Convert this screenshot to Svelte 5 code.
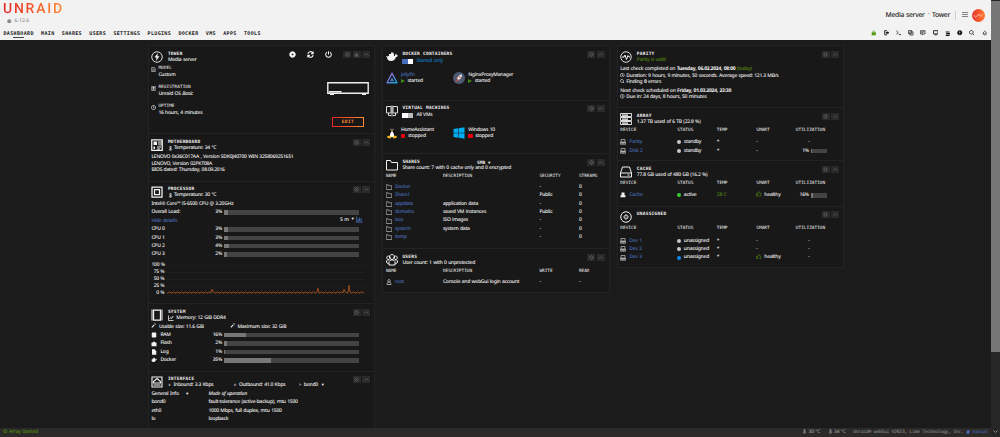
<script lang="ts">
  type Shape = { d: string; fill?: boolean; w?: number };

  const icons: Record<string, Shape[]> = {
    tower: [{ d: 'M12 1.5a10.5 10.5 0 1 0 0 21a10.5 10.5 0 1 0 0-21z', w: 1.8 }, { d: 'M13.5 4 7 13h4l-1 7 7-9.500h-4z', fill: true }],
    board: [{ d: 'M1.500 1.500h21v21h-21z', w: 2.5 }, { d: 'M5 5h7v7H5zM15 4h2v9h-2zM19 4h2v9h-2zM5 15h3v5H5zM12 15h8v2h-8zM12 19h6v2h-6z', fill: true }],
    cpu: [{ d: 'M2 2h20v20H2z', w: 2.5 }, { d: 'M7 7h10v10H7z', w: 2.5 }],
    memory: [{ d: 'M5 2h14v20H5z', w: 2.5 }, { d: 'M2 1v22M22 1v22', w: 2 }],
    port: [{ d: 'M2 2h20v20H2z', w: 2.2 }, { d: 'M5 14v-3l7-6 7 6v3zM5 18h14', w: 2.2 }],
    whale: [{ d: 'M0 10c3 1 3 1 5 0h13c0-3 1-4 2-5 1 1 1 2 1 3l3 1c-1 2-3 3-4 3-2 6-6 8-10 8-5 0-8-3-8-8-1 0-2-1-2-2zM6 6h10v4H6zM10 3h5v4h-5z', fill: true }],
    vm: [{ d: 'M1 3h9v13H1zM14 3h9v13h-9zM5 16v5h5M19 16v5h-5M12 1v22', w: 1.8 }],
    folder: [{ d: 'M1 3h8l2 4h12v15H1z', w: 2 }],
    users: [{ d: 'M12 1a5 5 0 1 0 .1 0zM5 4a3.500 3.500 0 1 0 .1 0zM19 4a3.500 3.500 0 1 0 .1 0zM6 22v-5c0-7 12-7 12 0v5zM1 17v-3q2-4 5-2M23 17v-3q-2-4-5-2M1 17l5 3M23 17l-5 3', w: 2 }],
    parity: [{ d: 'M12 1.500a10.500 10.500 0 1 0 0 21a10.500 10.500 0 1 0 0-21z', w: 1.8 }, { d: 'M4 12h4l2-4 3 9 3-8 2 3h2', w: 2 }],
    array: [{ d: 'M1 1h22v6H1zM1 9h22v6H1zM1 17h22v6H1z', w: 1.8 }, { d: 'M4 4h12M4 12h12M4 20h12', w: 2.500 }],
    disk: [{ d: 'M5 2h14l4 12v8H1v-8zM1 14h22M15 18h4', w: 2 }],
    unassigned: [{ d: 'M12 1.500a10.500 10.500 0 1 0 0 21a10.500 10.500 0 1 0 0-21zM12 8a4 4 0 1 0 .1 0z', w: 2 }, { d: 'M11 11h2v2h-2z', fill: true }],
    gear: [{ d: 'M12 5a7 7 0 1 0 .1 0zM12 1v4M12 19v4M1 12h4M19 12h4M4 4l3 3M17 17l3 3M20 4l-3 3M7 17l-3 3', w: 4 }],
    up: [{ d: 'M3 17l9-9 9 9', w: 4 }],
    eject: [{ d: 'M2 15 12 4l10 11zM2 17h20v4H2z', fill: true }],
    stop: [{ d: 'M12 5a7 7 0 1 0 .1 0z', w: 8 }],
    sync: [{ d: 'M3 10a9 9 0 0 1 16-4M21 2v7h-7M21 14a9 9 0 0 1-16 4M3 22v-7h7', w: 4 }],
    power: [{ d: 'M7 4a9.500 9.500 0 1 0 10 0M12 1v11', w: 3.500 }],
    file: [{ d: 'M4 1h11l5 6v16H4z', w: 3 }, { d: 'M8 10h8M8 14h8M8 18h8', w: 2 }],
    badge: [{ d: 'M4 1h16v22H4zM8 18h8', w: 3 }, { d: 'M12 5a4 4 0 1 0 .1 0z', fill: true }],
    clock: [{ d: 'M12 2a10 10 0 1 0 .1 0zM12 7v6h4', w: 3.500 }],
    thermo: [{ d: 'M9 2h6v11a5 5 0 1 1-6 0z', w: 3 }, { d: 'M11 8h3v11h-3z', fill: true }],
    chart: [{ d: 'M2 2v20h20', w: 3 }, { d: 'M6 16l5-6 4 3 6-9', w: 3.500 }],
    bars: [{ d: 'M1 2h3v17h19v3H1zM6 10h3v7H6zM11 5h3v12h-3zM16 8h3v9h-3z', fill: true }],
    wand: [{ d: 'M4 21 16 9', w: 5 }, { d: 'M14 2h8v8z', fill: true }],
    ram: [{ d: 'M5 2h14l2 4v12l-2 4H5l-2-4V6z', fill: true }],
    flash: [{ d: 'M8 3h8v3h6v15H2V6h6z', fill: true }],
    log: [{ d: 'M4 1h10l7 7v15H4z', fill: true }],
    search: [{ d: 'M10 2a8 8 0 1 0 .1 0zM16 16l6 6', w: 3.500 }],
    user: [{ d: 'M12 2a5 5 0 1 0 .1 0zM4 22c0-13 16-13 16 0z', w: 2.500 }],
    drive: [{ d: 'M4 2h16v11H4zM2 13h20v8H2zM6 17h12', w: 2.200 }],
    ssd: [{ d: 'M6 2h12v11h4v8H2v-8h4z', fill: true }],
    thumb: [{ d: 'M2 10h5v12H2zM7 11l5-9q4 0 2 7h8l-2 13H7', w: 2.500 }],
    lock: [{ d: 'M3 10h18v13H3z', fill: true }, { d: 'M7 10V7q5-9 10 0v3', w: 3 }],
    exit: [{ d: 'M13 3H3v18h10', w: 4 }, { d: 'M8 9h7V4l8 8-8 8v-5H8z', fill: true }],
    term: [{ d: 'M2 4l8 7-8 7M12 20h11', w: 3.500 }],
    copy: [{ d: 'M2 2h14v14H2zM8 8h14v14H8z', w: 3 }],
    comment: [{ d: 'M2 3h20v14h-8l-4 5v-5H2zM6 8h12M6 12h8', w: 3 }],
    monitor: [{ d: 'M2 3h20v14H2zM7 21h10', w: 4 }],
    server: [{ d: 'M3 2h17v5H3zM5 9h17v6H5zM3 17h17v5H3z', fill: true }],
    help: [{ d: 'M12 1a11 11 0 1 0 .1 0zM10.500 17h3v3h-3zM10.500 6h3v8h-3z', fill: true }],
    bell: [{ d: 'M4 18q3-3 3-9 5-9 10 0 0 6 3 9zM10 22h4', w: 3 }],
    globe: [{ d: 'M12 1a11 11 0 1 0 .1 0z', fill: true }],
    book: [{ d: 'M6 2h16l-3 20H2z', fill: true }],
  };

  const nav = ['Dashboard', 'Main', 'Shares', 'Users', 'Settings', 'Plugins', 'Docker', 'VMs', 'Apps', 'Tools'];
  const tools = ['lock', 'exit', 'term', 'copy', 'comment', 'monitor', 'server', 'help', 'search', 'bell'];

  const cores = [3, 3, 4, 2];
  const usage = [
    { icon: 'ram', label: 'RAM', value: 16 },
    { icon: 'flash', label: 'Flash', value: 2 },
    { icon: 'log', label: 'Log', value: 1 },
    { icon: 'whale', label: 'Docker', value: 35 },
  ];
  const network = [
    ['bond0', 'fault-tolerance (active-backup), mtu 1500'],
    ['eth0', '1000 Mbps, full duplex, mtu 1500'],
    ['lo', 'loopback'],
  ];
  const shares = [
    ['Docker', '', '-'],
    ['Share1', '', 'Public'],
    ['appdata', 'application data', '-'],
    ['domains', 'saved VM instances', 'Public'],
    ['isos', 'ISO images', '-'],
    ['system', 'system data', '-'],
    ['temp', '', '-'],
  ];

  type Device = { name: string; icon: string; color: string; status: string; temp: string; healthy?: boolean; used?: number };
  const arrayDisks: Device[] = [
    { name: 'Parity', icon: 'drive', color: '#c8c8c8', status: 'standby', temp: '*' },
    { name: 'Disk 2', icon: 'drive', color: '#c8c8c8', status: 'standby', temp: '*', used: 1 },
  ];
  const cacheDisks: Device[] = [
    { name: 'Cache', icon: 'ssd', color: '#33cc33', status: 'active', temp: '28 C', healthy: true, used: 16 },
  ];
  const otherDisks: Device[] = [
    { name: 'Dev 1', icon: 'drive', color: '#c8c8c8', status: 'unassigned', temp: '*' },
    { name: 'Dev 2', icon: 'drive', color: '#c8c8c8', status: 'unassigned', temp: '*' },
    { name: 'Dev 3', icon: 'drive', color: '#0c8cf0', status: 'unassigned', temp: '*', healthy: true },
  ];

  // CPU load history: low noise with a few spikes
  const spikes: Record<number, number> = { 45: 4, 151: 5, 177: 4, 182: 8 };
  const history = Array.from({ length: 198 }, (_, x) => `${x},${30.2 - (spikes[x] ?? (x % 4 < 2 ? 0.2 : 1.3))}`).join(' ');
</script>

{#snippet icon(name: string, size = 5)}
  <svg class="icon" width={size} height={size} viewBox="0 0 24 24">
    {#each icons[name] as s}
      <path d={s.d} fill={s.fill ? 'currentColor' : 'none'} stroke={s.fill ? 'none' : 'currentColor'} stroke-width={s.w ?? 2} />
    {/each}
  </svg>
{/snippet}

{#snippet controls(names: string[])}
  <span class="controls">
    {#each names as name}<button>{@render icon(name, 5)}</button>{/each}
  </span>
{/snippet}

{#snippet bar(value: number)}
  <span class="pct">{value}%</span>
  <span class="bar"><span class="fill" style="width: {value}%"></span></span>
{/snippet}

{#snippet devices(rows: Device[])}
  <div class="row devices th"><span>DEVICE</span><span>STATUS</span><span>TEMP</span><span>SMART</span><span>UTILIZATION</span></div>
  {#each rows as r}
    <div class="row devices">
      <span class="with-icon">{@render icon(r.icon, 6)}<a href="#top">{r.name}</a></span>
      <span class="with-dot"><i style="background: {r.color}"></i>{r.status}</span>
      <span class:green={r.temp !== '*'}>{r.temp}</span>
      <span class="health">
        {#if r.healthy}<b class="green">{@render icon('thumb', 5.5)}</b>healthy{:else}-{/if}
      </span>
      <span class="util">
        {#if r.used}{@render bar(r.used)}{:else}<span class="none">-</span>{/if}
      </span>
    </div>
  {/each}
{/snippet}

<div class="window">
  <div class="page" id="top">
    <header>
      <div class="brand">
        <div>
          <div class="logo">UNRAID</div>
          <div class="version">{@render icon('globe', 4.5)}6.12.6</div>
        </div>
        <div class="server">
          <span>Media server</span><span class="dot">•</span><span>Tower</span>
          <span class="divider"></span>
          <svg width="6" height="6" viewBox="0 0 6 6"><path d="M0 .5h6M0 2.500h6M0 4.500h6" stroke="#777" stroke-width=".9" /></svg>
          <svg class="avatar" width="13" height="13" viewBox="0 0 13 13">
            <defs><linearGradient id="av"><stop stop-color="#e8332e" /><stop offset="1" stop-color="#ff7a2c" /></linearGradient></defs>
            <circle cx="6.500" cy="6.500" r="6.500" fill="url(#av)" />
            <path d="M2.300 6v1.200q1.300 2 2.600 0t2.300-1.900q.8 3 2.200 1.500t1.300-2" fill="none" stroke="#ffd2bd" stroke-width=".8" />
          </svg>
        </div>
      </div>
      <div class="menu">
        <nav>
          {#each nav as item, i}<a href="#top" class:active={i === 0}>{item}</a>{/each}
        </nav>
        <div class="tools">
          {#each tools as t}<span class={t}>{@render icon(t, 5.5)}</span>{/each}
        </div>
      </div>
    </header>

    <main>
      <div class="column">
        <section style="height: 88px">
          <div class="head tower-head">
            {@render icon('tower', 12)}
            <div><h2>TOWER</h2><p>Media server</p></div>
            <div class="actions">{@render icon('stop', 7)}{@render icon('sync', 7)}{@render icon('power', 7)}</div>
            {@render controls(['gear', 'eject', 'up'])}
          </div>
          <div class="tower">
            <dl>
              <dt>{@render icon('file', 5)}MODEL</dt><dd>Custom</dd>
              <dt>{@render icon('badge', 5)}REGISTRATION</dt><dd>Unraid OS <em>Basic</em></dd>
              <dt>{@render icon('clock', 5)}UPTIME</dt><dd>16 hours, 4 minutes</dd>
            </dl>
            <div class="case">
              <svg width="42" height="13" viewBox="0 0 42 13">
                <path d="M.8.8h40.400v10.400H.8z" fill="none" stroke="#eee" stroke-width="1.400" />
                <path d="M2 9h12.500v1.500H2zM3 11h4v2H3zM35 11h4v2h-4z" fill="#eee" />
              </svg>
              <button class="edit">EDIT</button>
            </div>
          </div>
        </section>

        <section style="height: 47.5px">
          <div class="head">
            {@render icon('board', 12)}
            <div><h2>MOTHERBOARD</h2><p>{@render icon('thermo', 5)}Temperature: 34 °C</p></div>
            {@render controls(['gear', 'up'])}
          </div>
          <div class="lines board-lines">
            <div>LENOVO 0x36C017AA , Version SDK0J40700 WIN 3258069251651</div>
            <div>LENOVO, Version 02PKT08A</div>
            <div>BIOS dated: Thursday, 08.09.2016</div>
          </div>
        </section>

        <section style="height: 122.5px">
          <div class="head">
            {@render icon('cpu', 12)}
            <div><h2>PROCESSOR</h2><p>{@render icon('thermo', 5)}Temperature: 30 °C</p></div>
            {@render controls(['gear', 'up'])}
          </div>
          <div class="row">Intel® Core™ i5-6500 CPU @ 3.20GHz</div>
          <div class="row load"><span>Overall Load:</span>{@render bar(3)}</div>
          <div class="row between"><a href="#top">Hide details</a><span class="range">5 m <small>▼</small><a href="#top">{@render icon('bars', 7)}</a></span></div>
          {#each cores as value, i}
            <div class="row load"><span>CPU {i}</span>{@render bar(value)}</div>
          {/each}
          <div class="chart">
            <div class="axis"><span>100 %</span><span>75 %</span><span>50 %</span><span>25 %</span><span>0 %</span></div>
            <svg width="198" height="33" viewBox="0 0 198 33">
              <path d="M0 2.500h198M0 9.500h198M0 16.500h198M0 23.500h198M0 30.500h198" stroke="#242424" stroke-width=".6" />
              <polyline points={history} fill="none" stroke="#a34e1b" stroke-width=".9" />
            </svg>
          </div>
        </section>

        <section style="height: 67.5px">
          <div class="head">
            {@render icon('memory', 12)}
            <div><h2>SYSTEM</h2><p>{@render icon('chart', 6)}&nbsp;Memory: 12 GiB DDR4</p></div>
            {@render controls(['gear', 'up'])}
          </div>
          <div class="row sizes"><span>{@render icon('wand', 5)}Usable size: 11.6 GiB</span><span>{@render icon('wand', 5)}Maximum size: 32 GiB</span></div>
          {#each usage as u}
            <div class="row load"><span class="with-icon">{@render icon(u.icon, 6)}{u.label}</span>{@render bar(u.value)}</div>
          {/each}
        </section>

        <section class="last">
          <div class="head">
            {@render icon('port', 12)}
            <div>
              <h2>INTERFACE</h2>
              <p class="traffic"><span><small>∨</small>&nbsp; Inbound: 3.3 Kbps</span><span><small>∧</small>&nbsp; Outbound: 41.0 Kbps</span><span><small>&gt;</small>&nbsp; bond0 &nbsp;<small>▼</small></span></p>
            </div>
            {@render controls(['gear', 'up'])}
          </div>
          <div class="row net"><span>General Info <small>▼</small></span><em>Mode of operation</em></div>
          {#each network as [name, mode]}
            <div class="row net"><span>{name}</span><span>{mode}</span></div>
          {/each}
        </section>
      </div>

      <div class="column">
        <section style="height: 54.5px">
          <div class="head">
            {@render icon('whale', 12)}
            <div><h2>DOCKER CONTAINERS</h2><p class="switch"><i class="toggle on"></i><span class="azure">Started only</span></p></div>
            {@render controls(['gear', 'up'])}
          </div>
          <div class="apps">
            <div class="app">
              <svg width="12" height="12" viewBox="0 0 24 24">
                <defs><linearGradient id="jf" x2="1" y2="1"><stop stop-color="#a95cc8" /><stop offset="1" stop-color="#12a0dc" /></linearGradient></defs>
                <path d="M12 2.500 22 21.500H2z" fill="none" stroke="url(#jf)" stroke-width="3" stroke-linejoin="round" />
                <path d="M12 11l4 7.500H8z" fill="url(#jf)" />
              </svg>
              <div><a href="#top">jellyfin</a><p><i class="play"></i>started</p></div>
            </div>
            <div class="app">
              <svg width="12" height="12" viewBox="0 0 24 24">
                <circle cx="12" cy="12" r="12" fill="#4c5b73" />
                <path d="M18 5c-5 0-8 4-10 8l3 3c4-2 7-5 7-11z" fill="#e6e6e6" />
                <path d="M9 10l-4 3 3 1zM14 15l-3 4-1-3zM7 16l-3 4 5-2zM13 8l3 3-2 1-2-2z" fill="#e2523b" />
              </svg>
              <div>NginxProxyManager<p><i class="play"></i>started</p></div>
            </div>
          </div>
        </section>

        <section style="height: 53.5px">
          <div class="head">
            {@render icon('vm', 12)}
            <div><h2>VIRTUAL MACHINES</h2><p class="switch"><i class="toggle"></i>All VMs</p></div>
            {@render controls(['gear', 'up'])}
          </div>
          <div class="apps">
            <div class="app">
              <svg width="12" height="12" viewBox="0 0 24 24">
                <path d="M12 1c-4 0-4 3-4 7-2 3-4 6-3 12h14c1-6-1-9-3-12 0-4 0-7-4-7z" fill="#050505" />
                <path d="M12 8c-3 2-5 7-4 12h8c1-5-1-10-4-12z" fill="#fff" />
                <path d="M9.500 6.500h5L12 9.500zM3 18l5-1 3 5-3 1-6-2zM21 18l-5-1-3 5 3 1 6-2z" fill="#f5b921" />
                <path d="M9 3.500h2v2H9zM13 3.500h2v2h-2z" fill="#fff" />
              </svg>
              <div>HomeAssistant<p><i class="halt"></i>stopped</p></div>
            </div>
            <div class="app">
              <svg width="12" height="12" viewBox="0 0 24 24"><path d="M1 4l9-1.500V11.500H1zM11 2.300 23 .5v11H11zM1 12.500h9v9L1 20zM11 12.500h12v11L11 21.700z" fill="#00adef" /></svg>
              <div>Windows 10<p><i class="halt"></i>stopped</p></div>
            </div>
          </div>
        </section>

        <section style="height: 95px">
          <div class="head">
            {@render icon('folder', 12)}
            <div><h2 class="split">SHARES<span>SMB <small>▼</small></span></h2><p>Share count: 7 with 0 cache only and 0 encrypted</p></div>
            {@render controls(['gear', 'up'])}
          </div>
          <div class="row shares th"><span>NAME</span><span>DESCRIPTION</span><span>SECURITY</span><span>STREAMS</span></div>
          {#each shares as [name, description, security]}
            <div class="row shares"><span class="with-icon">{@render icon('folder', 6)}<a href="#top">{name}</a></span><span>{description}</span><span>{security}</span><span>0</span></div>
          {/each}
        </section>

        <section style="height: 43.5px">
          <div class="head">
            {@render icon('users', 12)}
            <div><h2>USERS</h2><p>User count: 1 with 0 unprotected</p></div>
            {@render controls(['gear', 'up'])}
          </div>
          <div class="row shares th"><span>NAME</span><span>DESCRIPTION</span><span>WRITE</span><span>READ</span></div>
          <div class="row shares"><span class="with-icon">{@render icon('user', 6)}<a href="#top">root</a></span><span>Console and webGui login account</span><span>-</span><span>-</span></div>
        </section>
      </div>

      <div class="column">
        <section style="height: 62px">
          <div class="head">
            {@render icon('parity', 12)}
            <div><h2>PARITY</h2><p class="green">Parity is valid</p></div>
            {@render controls(['gear', 'up'])}
          </div>
          <div class="lines">
            <div>Last check completed on <b>Tuesday, 06.02.2024, 08:00</b> <span class="green">(today)</span></div>
            <div>{@render icon('clock', 4.5)} Duration: 9 hours, 9 minutes, 50 seconds. Average speed: 121.3 MB/s</div>
            <div>{@render icon('search', 4.5)} Finding <b>0</b> errors</div>
            <div class="next">Next check scheduled on <b>Friday, 01.03.2024, 23:30</b></div>
            <div>{@render icon('clock', 4.5)} Due in: 24 days, 8 hours, 50 minutes</div>
          </div>
        </section>
        <section style="height: 53px">
          <div class="head">
            {@render icon('array', 12)}
            <div><h2>ARRAY</h2><p>1.37 TB used of 6 TB (22.8 %)</p></div>
            {@render controls(['gear', 'up'])}
          </div>
          {@render devices(arrayDisks)}
        </section>
        <section style="height: 45.5px">
          <div class="head">
            {@render icon('disk', 12)}
            <div><h2>CACHE</h2><p>77.8 GB used of 480 GB (16.2 %)</p></div>
            {@render controls(['gear', 'up'])}
          </div>
          {@render devices(cacheDisks)}
        </section>
        <section style="height: 61px">
          <div class="head">
            {@render icon('unassigned', 12)}
            <div><h2>UNASSIGNED</h2></div>
            {@render controls(['gear', 'up'])}
          </div>
          {@render devices(otherDisks)}
        </section>
      </div>
    </main>

    <footer>
      <span class="green">{@render icon('gear', 4.5)} Array Started</span>
      <span class="info">
        <span>{@render icon('thermo', 5)} 30 °C</span>
        <span>{@render icon('thermo', 5)} 34 °C</span>
        <span class="copyright">Unraid® webGui ©2023, Lime Technology, Inc. <a href="#top">{@render icon('book', 4)} manual</a></span>
      </span>
    </footer>
  </div>
  <div class="scrollbar"><div class="thumb"></div><svg width="5" height="4" viewBox="0 0 5 4"><path d="M.5.5l2 2 2-2" fill="none" stroke="#888" /></svg></div>
</div>

<style>
  :global(body) {
    background: #1c1b1b;
  }

  .window {
    display: flex;
    height: 437px;
    overflow: hidden;
    font: 500 5px/6.4px 'Noto Sans', 'Open Sans', sans-serif;
    letter-spacing: -0.24px;
    word-spacing: 0.4px;
    color: #f2f2f2;
    text-rendering: geometricPrecision;
    white-space: nowrap;
  }

  .page {
    width: 991px;
    display: flex;
    flex-direction: column;
  }

  a {
    color: #486dba;
    text-decoration: none;
  }

  p, h2, dl, dd {
    margin: 0;
  }

  small {
    font-size: 4px;
  }

  .icon {
    flex: none;
    vertical-align: -0.8px;
  }

  .green {
    color: #4f8a10;
  }

  header {
    height: 40px;
    background: #f2f2f2;
    color: #1c1b1b;
    flex: none;
  }

  .brand {
    display: flex;
    justify-content: space-between;
    height: 28px;
    padding: 1px 6px 0 3px;
    box-sizing: border-box;
  }

  .logo {
    width: 62px;
    padding-top: 0.6px;
    font: 500 14px/14px Roboto, sans-serif;
    letter-spacing: 1.75px;
    color: transparent;
    background: linear-gradient(90deg, #e22828, #ff8c2f);
    background-clip: text;
  }

  .version {
    display: flex;
    align-items: center;
    gap: 3px;
    padding: 2px 0 0 4px;
    color: #8b8b8b;
    line-height: 7px;
    letter-spacing: 0.1px;
  }

  .server {
    display: flex;
    align-items: center;
    padding-top: 1px;
    font-size: 6.8px;
    letter-spacing: -0.3px;
  }

  .dot {
    margin: 0 3px;
    font-size: 4px;
    color: #888;
  }

  .divider {
    width: 1px;
    height: 9px;
    margin: 0 6px 0 5px;
    background: #d0d0d0;
  }

  .avatar {
    margin-left: 4px;
  }

  .menu {
    display: flex;
    justify-content: space-between;
    padding: 0 4px 0 3.5px;
    align-items: center;
    height: 11px;
  }

  nav {
    display: flex;
    gap: 7.3px;
    font: bold 5px/8px 'DejaVu Sans Mono', monospace;
    letter-spacing: 0.35px;
    text-transform: uppercase;
  }

  nav a {
    color: #1c1b1b;
  }

  nav .active {
    background: linear-gradient(#444, #444) center bottom / 11px 1px no-repeat;
  }

  .tools {
    display: flex;
    gap: 6.75px;
    line-height: 6px;
  }

  .tools .lock {
    color: #4f9a10;
  }

  main {
    flex: 1;
    min-height: 0;
    display: flex;
    align-items: flex-start;
    gap: 7.3px;
    padding: 5px 0 0 148px;
    background: #1c1b1b;
  }

  .column {
    width: 227.2px;
    box-sizing: border-box;
    border: 1px solid #232323;
    border-top: 0;
    background: #191818;
  }

  section {
    box-sizing: border-box;
    padding: 4.6px 3.8px 0 2.4px;
    border-top: 1px solid #232323;
    overflow: hidden;
  }

  .last {
    height: 58px;
  }

  .head {
    display: flex;
    height: 14px;
    gap: 4.5px;
  }

  h2 {
    height: 6.2px;
    font: bold 4.5px/7px 'DejaVu Sans Mono', monospace;
    letter-spacing: 0.24px;
    word-spacing: 0;
  }

  .split {
    display: flex;
    gap: 57px;
  }

  .split span {
    letter-spacing: 0;
  }

  .head p {
    display: flex;
    align-items: center;
    gap: 1px;
    height: 6.5px;
  }

  .controls {
    display: flex;
    gap: 1.5px;
    margin-left: auto;
  }

  .controls button {
    display: flex;
    align-items: center;
    justify-content: center;
    width: 8px;
    height: 7px;
    padding: 0;
    border: 0;
    background: #2b2a29;
    color: #606060;
  }

  .actions {
    display: flex;
    gap: 11px;
    margin-left: auto;
  }

  .tower-head .controls {
    margin-left: 7px;
  }

  .tower {
    display: flex;
    justify-content: space-between;
  }

  dt {
    height: 6px;
    display: flex;
    align-items: center;
    gap: 2px;
    font: 4.4px/6px 'DejaVu Sans Mono', monospace;
    letter-spacing: 0.05px;
  }

  dd {
    height: 13px;
    padding-left: 7px;
  }

  dl {
    padding-top: 1.8px;
  }

  .case {
    display: flex;
    flex-direction: column;
    align-items: flex-end;
    padding: 17.5px 1.5px 0 0;
  }

  .edit {
    width: 32px;
    height: 10px;
    margin: 21.5px 5px 0 0;
    padding: 0;
    border: 1px solid;
    border-image: linear-gradient(90deg, #e22828, #ff8c2f) 1;
    background: none;
    color: #ff8c2f;
    font: bold 4.5px/7px 'DejaVu Sans Mono', monospace;
    letter-spacing: 0.3px;
  }

  .lines {
    padding-top: 1.7px;
  }

  .board-lines > :first-child {
    letter-spacing: -0.23px;
  }

  .next {
    margin-top: 2px;
  }

  .row {
    display: flex;
    align-items: center;
    height: 8.4px;
    line-height: 8.4px;
  }

  .between {
    justify-content: space-between;
    padding-right: 7px;
  }

  .range {
    display: flex;
    gap: 2px;
  }

  .load > :first-child {
    width: 57.6px;
  }

  .pct {
    width: 13px;
    text-align: right;
  }

  .bar {
    width: 135px;
    height: 4.5px;
    margin-left: 2px;
    background: #444;
  }

  .fill {
    display: block;
    height: 100%;
    background: #777;
  }

  .chart {
    display: flex;
    align-items: center;
    padding-top: 3.5px;
  }

  .axis {
    width: 13px;
    margin-right: 2.5px;
    text-align: right;
    line-height: 6.8px;
  }

  .axis span {
    display: block;
  }

  .sizes span {
    width: 78.5px;
  }

  .sizes .icon {
    margin-right: 2.5px;
  }

  .with-icon {
    display: flex;
    align-items: center;
    gap: 3px;
  }

  .head .traffic {
    gap: 0;
  }

  .traffic span {
    width: 65.5px;
  }

  .traffic span:last-child {
    width: 30px;
  }

  .net > :first-child {
    width: 57px;
  }

  .net small {
    margin-left: 5px;
  }

  .head .switch {
    gap: 3px;
    padding-top: 1px;
  }

  .azure {
    color: #0c7cc0;
  }

  .toggle {
    width: 11px;
    height: 5px;
    background: linear-gradient(90deg, #fff 50%, #bbb 50%);
  }

  .toggle.on {
    background: linear-gradient(90deg, #486dba 50%, #fff 50%);
  }

  .apps {
    display: flex;
    padding-top: 7.5px;
  }

  .app {
    display: flex;
    gap: 3px;
    width: 67.3px;
    line-height: 6.2px;
  }

  .app p {
    display: flex;
    align-items: center;
    gap: 2.5px;
  }

  .play {
    border-left: 4px solid #3f8a10;
    border-top: 2px solid transparent;
    border-bottom: 2px solid transparent;
  }

  .halt {
    width: 4.5px;
    height: 4.5px;
    border-radius: 1px;
    background: #f0000c;
  }

  .th {
    font: 4.4px/8px 'DejaVu Sans Mono', monospace;
    letter-spacing: 0.02px;
    height: 8px;
    margin-bottom: 2.2px;
  }

  .shares > :nth-child(1),
  .devices > :nth-child(1) {
    width: 57px;
  }

  .shares > :nth-child(2) {
    width: 96.5px;
  }

  .shares > :nth-child(3) {
    width: 39.5px;
  }

  .devices > :nth-child(2),
  .devices > :nth-child(3),
  .devices > :nth-child(4) {
    width: 39.5px;
  }

  .devices.th {
    margin-bottom: 3.6px;
  }

  .with-dot {
    display: flex;
    align-items: center;
    gap: 2.5px;
  }

  .with-dot i {
    width: 4px;
    height: 4px;
    border-radius: 50%;
  }

  .health {
    display: flex;
    align-items: center;
  }

  .health b {
    margin-right: 2.5px;
  }

  .util {
    display: flex;
    align-items: center;
  }

  .util .bar {
    width: 16.500px;
  }

  .none {
    padding-left: 12.500px;
  }

  footer {
    display: flex;
    justify-content: space-between;
    height: 9px;
    padding: 0 3px;
    flex: none;
    background: #2b2a29;
    color: #999;
    line-height: 9px;
  }

  .info {
    display: flex;
    gap: 7.5px;
  }

  .copyright {
    font: 4.6px/9px 'DejaVu Sans Mono', monospace;
    letter-spacing: -0.2px;
    word-spacing: 0;
  }

  .scrollbar {
    width: 9px;
    display: flex;
    flex-direction: column;
    align-items: center;
    justify-content: space-between;
    padding: 1px 0 3px;
    box-sizing: border-box;
    background: #262626;
  }

  .thumb {
    width: 9px;
    height: 351px;
    background: #777;
  }
</style>
